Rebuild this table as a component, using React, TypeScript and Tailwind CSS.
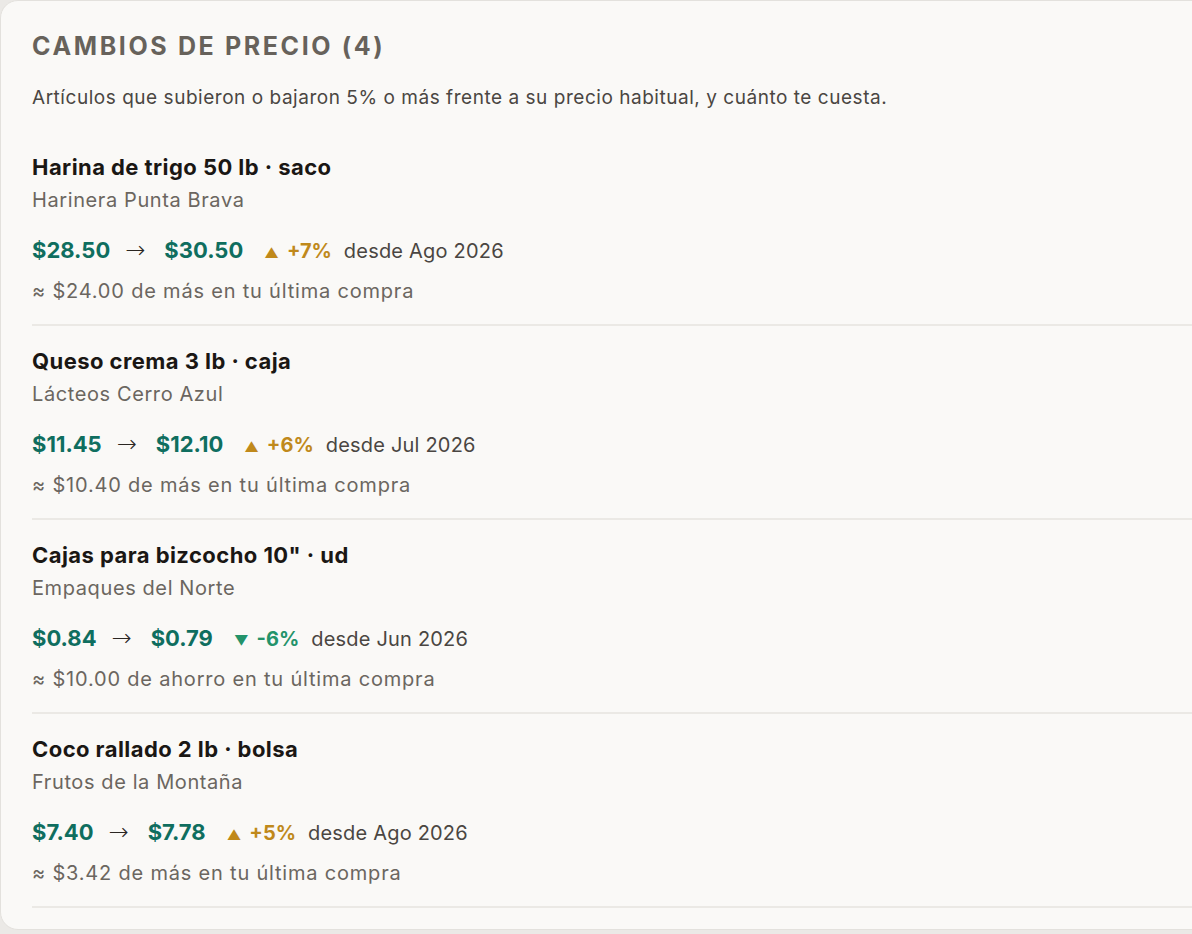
import React from "react";

type Item = {
  name: string;
  supplier: string;
  from: string;
  to: string;
  up: boolean;
  pct: string;
  since: string;
  note: string;
};

const items: Item[] = [
  {
    name: "Harina de trigo 50 lb · saco",
    supplier: "Harinera Punta Brava",
    from: "$28.50",
    to: "$30.50",
    up: true,
    pct: "+7%",
    since: "desde Ago 2026",
    note: "≈ $24.00 de más en tu última compra",
  },
  {
    name: "Queso crema 3 lb · caja",
    supplier: "Lácteos Cerro Azul",
    from: "$11.45",
    to: "$12.10",
    up: true,
    pct: "+6%",
    since: "desde Jul 2026",
    note: "≈ $10.40 de más en tu última compra",
  },
  {
    name: 'Cajas para bizcocho 10" · ud',
    supplier: "Empaques del Norte",
    from: "$0.84",
    to: "$0.79",
    up: false,
    pct: "-6%",
    since: "desde Jun 2026",
    note: "≈ $10.00 de ahorro en tu última compra",
  },
  {
    name: "Coco rallado 2 lb · bolsa",
    supplier: "Frutos de la Montaña",
    from: "$7.40",
    to: "$7.78",
    up: true,
    pct: "+5%",
    since: "desde Ago 2026",
    note: "≈ $3.42 de más en tu última compra",
  },
];

export default function App() {
  return (
    <div
      className="h-[934px] w-[1192px] overflow-hidden bg-[#ebe9e6]"
      style={{ fontFamily: "Inter, 'Noto Sans', sans-serif" }}
    >
      <div className="w-[1240px] rounded-[18px] border border-[#e3e1dd] bg-[#faf9f7] pl-[31px] pt-[29px] pb-[21px]">
        <h2 className="text-[25px] leading-[32px] font-bold tracking-[0.105em] text-[#67625b]">
          CAMBIOS DE PRECIO (4)
        </h2>
        <p className="mt-[22px] text-[19px] leading-[28px] tracking-[0.028em] text-[#4a4642]">
          Artículos que subieron o bajaron 5% o más frente a su precio habitual, y cuánto te cuesta.
        </p>
        <div className="mt-[20px]">
          {items.map((it, i) => (
            <div key={i} className="border-b-2 border-[#ebe9e5] pt-[23px] pb-[19px]">
              <div className="text-[22px] leading-[24px] font-bold tracking-[0.02em] text-[#1a1714]">
                {it.name}
              </div>
              <div className="mt-[7px] text-[20px] leading-[28px] tracking-[0.03em] text-[#6b6660]">
                {it.supplier}
              </div>
              <div className="mt-[21px] flex h-[30px] items-baseline text-[#0f6e5f]">
                <span className="text-[22px] leading-[30px] font-bold">{it.from}</span>
                <span
                  className="ml-[15px] mr-[19px] text-[24px] leading-[30px] font-extralight text-[#2a2622]"
                  style={{ fontFamily: "'DejaVu Sans', sans-serif" }}
                >
                  →
                </span>
                <span className="text-[22px] leading-[30px] font-bold">{it.to}</span>
                <span
                  className={
                    "ml-[21px] text-[20px] leading-[30px] font-bold " +
                    (it.up ? "text-[#c0891b]" : "text-[#23936a]")
                  }
                >
                  <span className="mr-[8px] text-[14px]">{it.up ? "▲" : "▼"}</span>
                  {it.pct}
                </span>
                <span className="ml-[12px] text-[20px] leading-[30px] tracking-[0.01em] text-[#4a4642]">
                  {it.since}
                </span>
              </div>
              <div className="mt-[12px] text-[20px] leading-[28px] tracking-[0.04em] text-[#6b6660]">
                {it.note}
              </div>
            </div>
          ))}
        </div>
      </div>
    </div>
  );
}
